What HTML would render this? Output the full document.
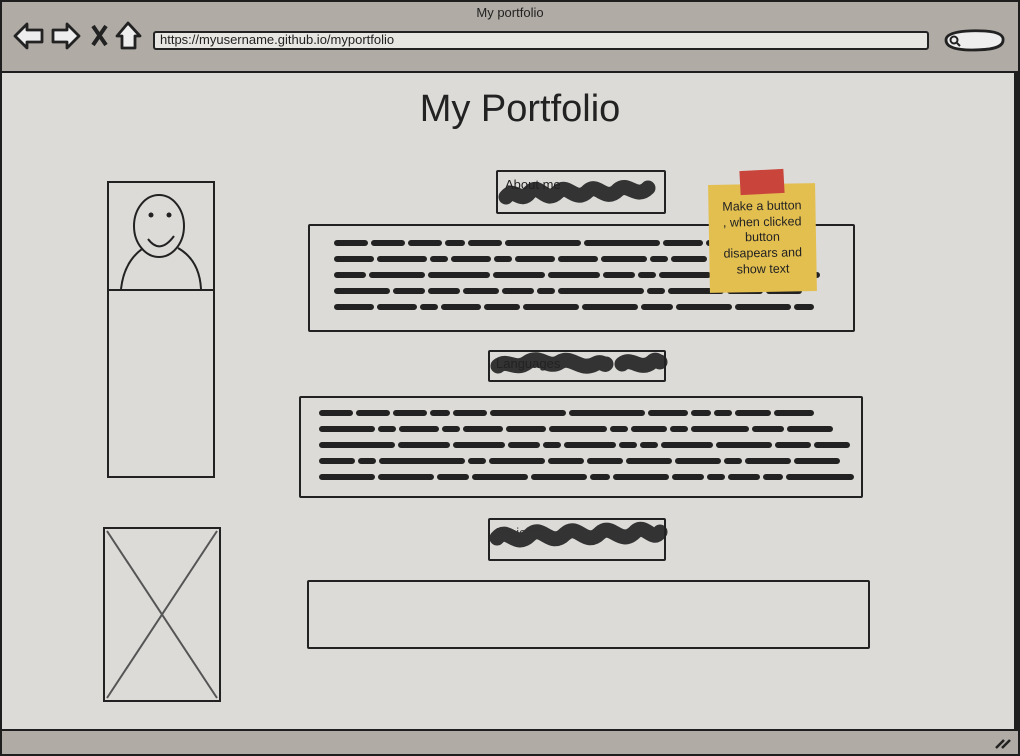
<!DOCTYPE html>
<html><head><meta charset="utf-8"><style>
*{margin:0;padding:0;box-sizing:border-box}
body{width:1020px;height:756px;background:#1e1e1e;font-family:"Liberation Sans",sans-serif;overflow:hidden;position:relative}
.a{position:absolute}
.box{position:absolute;border:2.5px solid #222;border-radius:2px}
</style></head><body>
<div class="a" style="left:2px;top:2px;width:1016px;height:69px;background:#b0aba5"></div>
<div class="a" style="left:2px;top:73px;width:1012px;height:656px;background:#dcdbd8"></div>
<div class="a" style="left:2px;top:731px;width:1016px;height:23px;background:#b0aba5"></div>
<div class="a" style="left:0;top:5px;width:1020px;text-align:center;font-size:13px;color:#222">My portfolio</div>
<svg class="a" style="left:0;top:0" width="1020" height="756">
<g fill="#eee" stroke="#222" stroke-width="2.8" stroke-linejoin="round">
<path d="M15 36 L27 24 L27 30 L42 30 L42 42 L27 42 L27 48 Z"/>
<path d="M79 36 L67 24 L67 30 L53 30 L53 42 L67 42 L67 48 Z"/>
<path d="M128 23 L140 36 L135 36 L135 48 L122 48 L122 36 L117 36 Z"/>
<path d="M946 40 C946 32 965 30 985 31 C1000 32 1004 36 1003 41 C1002 48 990 50 972 50 C955 50 946 47 946 40 Z"/>
</g>
<path d="M93 26 L106 45 M106 26 L93 45" stroke="#222" stroke-width="4"/>
<circle cx="954" cy="40" r="3.5" fill="none" stroke="#222" stroke-width="2"/><path d="M957 43 L960 46" stroke="#222" stroke-width="2"/>
<path d="M996 748 L1004 740 M1002 748 L1010 740" stroke="#222" stroke-width="2.5"/>
<rect x="108" y="182" width="106" height="108" fill="none" stroke="#222" stroke-width="2"/>
<rect x="108" y="290" width="106" height="187" fill="none" stroke="#222" stroke-width="2"/>
<ellipse cx="159" cy="226" rx="25" ry="31" fill="none" stroke="#222" stroke-width="2"/>
<circle cx="151" cy="215" r="2.5" fill="#222"/><circle cx="169" cy="215" r="2.5" fill="#222"/>
<path d="M148 239 Q160 255 174 236" fill="none" stroke="#222" stroke-width="2"/>
<path d="M121 289 C124 262 138 252 142 249 M178 248 C192 256 200 270 201 289" fill="none" stroke="#222" stroke-width="2"/>
<rect x="104" y="528" width="116" height="173" fill="none" stroke="#222" stroke-width="2"/>
<path d="M107 531 L217 698 M217 531 L107 698" stroke="#555" stroke-width="2"/>
<g stroke="#222" stroke-width="6" stroke-linecap="round">
<line x1="337" y1="243" x2="900" y2="243" stroke-dasharray="28 9 28 9 28 9 14 9 28 9 70 9 70 9 34 9 14 9 28 9 34 1000"/>
<line x1="337" y1="259" x2="900" y2="259" stroke-dasharray="34 9 44 9 12 9 34 9 12 9 34 9 34 9 40 9 12 9 30 9 40 9 30 1000"/>
<line x1="337" y1="275" x2="900" y2="275" stroke-dasharray="26 9 50 9 56 9 46 9 46 9 26 9 12 9 46 9 12 9 40 9 30 1000"/>
<line x1="337" y1="291" x2="900" y2="291" stroke-dasharray="50 9 26 9 26 9 30 9 26 9 12 9 80 9 12 9 50 9 30 9 30 1000"/>
<line x1="337" y1="307" x2="900" y2="307" stroke-dasharray="34 9 34 9 12 9 34 9 30 9 50 9 50 9 26 9 50 9 50 9 14 1000"/>
<line x1="322" y1="413" x2="900" y2="413" stroke-dasharray="28 9 28 9 28 9 14 9 28 9 70 9 70 9 34 9 14 9 12 9 30 9 34 1000"/>
<line x1="322" y1="429" x2="900" y2="429" stroke-dasharray="50 9 12 9 34 9 12 9 34 9 34 9 52 9 12 9 30 9 12 9 52 9 26 9 40 1000"/>
<line x1="322" y1="445" x2="900" y2="445" stroke-dasharray="70 9 46 9 46 9 26 9 12 9 46 9 12 9 12 9 46 9 50 9 30 9 30 1000"/>
<line x1="322" y1="461" x2="900" y2="461" stroke-dasharray="30 9 12 9 80 9 12 9 50 9 30 9 30 9 40 9 40 9 12 9 40 9 40 1000"/>
<line x1="322" y1="477" x2="900" y2="477" stroke-dasharray="50 9 50 9 26 9 50 9 50 9 14 9 50 9 26 9 12 9 26 9 14 9 62 1000"/>
</g>
<g stroke="#333" stroke-width="15" stroke-linecap="round" fill="none">
<path d="M506 197 C515 186 520 205 530 192 C540 182 545 205 558 192 C568 182 575 204 588 191 C598 182 605 203 618 190 C628 181 636 200 648 188"/>
<path d="M498 366 C508 358 515 372 528 362 C540 354 548 370 560 362 C572 355 580 372 595 364 C602 360 604 366 606 364 M622 364 C632 356 640 372 652 362 C656 358 658 362 660 362"/>
<path d="M497 538 C508 525 515 550 530 535 C542 523 550 549 565 534 C578 522 585 548 600 533 C612 522 620 547 635 532 C645 522 652 543 660 532"/>
</g>
</svg>
<div class="a" style="left:0;top:88px;width:1040px;text-align:center;font-size:38px;color:#222">My Portfolio</div>
<div class="box" style="left:496px;top:170px;width:170px;height:44px"><span class="a" style="left:7px;top:5px;font-size:13px;color:#222">About me</span></div>
<div class="box" style="left:308px;top:224px;width:547px;height:108px"></div>
<div class="box" style="left:488px;top:350px;width:178px;height:32px"><span class="a" style="left:6px;top:4px;font-size:13px;color:#222">Languages</span></div>
<div class="box" style="left:299px;top:396px;width:564px;height:102px"></div>
<div class="box" style="left:488px;top:518px;width:178px;height:43px"><span class="a" style="left:6px;top:5px;font-size:13px;color:#333">Projects</span></div>
<div class="box" style="left:307px;top:580px;width:563px;height:69px"></div>
<div class="a" style="left:153px;top:31px;width:776px;height:19px;background:#e8e6e3;border:2.5px solid #222;border-radius:3px;font-size:13px;padding-left:5px;line-height:14px;color:#222">https://myusername.github.io/myportfolio</div>
<div class="a" style="left:709px;top:184px;width:107px;height:108px;background:#e3bf50;transform:rotate(-1deg);text-align:center;font-size:12.5px;line-height:15.7px;color:#222;padding-top:15px">Make a button<br>, when clicked<br>button<br>disapears and<br>show text</div>
<div class="a" style="left:740px;top:170px;width:44px;height:24px;background:#c9453c;transform:rotate(-3deg)"></div>
</body></html>
